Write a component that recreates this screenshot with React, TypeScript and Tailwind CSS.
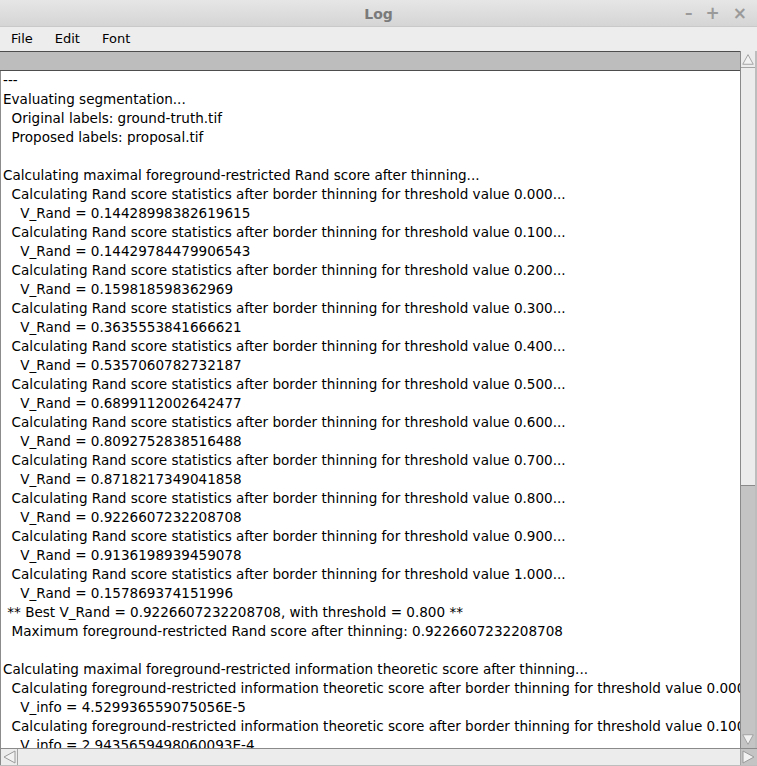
import React from 'react';

const rand: [string, string][] = [
  ['0.000', '0.14428998382619615'],
  ['0.100', '0.14429784479906543'],
  ['0.200', '0.159818598362969'],
  ['0.300', '0.3635553841666621'],
  ['0.400', '0.5357060782732187'],
  ['0.500', '0.6899112002642477'],
  ['0.600', '0.8092752838516488'],
  ['0.700', '0.8718217349041858'],
  ['0.800', '0.9226607232208708'],
  ['0.900', '0.9136198939459078'],
  ['1.000', '0.157869374151996'],
];

const lines: string[] = [
  '---',
  'Evaluating segmentation...',
  '  Original labels: ground-truth.tif',
  '  Proposed labels: proposal.tif',
  '',
  'Calculating maximal foreground-restricted Rand score after thinning...',
  ...rand.flatMap(([t, v]) => [
    `  Calculating Rand score statistics after border thinning for threshold value ${t}...`,
    `    V_Rand = ${v}`,
  ]),
  ' ** Best V_Rand = 0.9226607232208708, with threshold = 0.800 **',
  '  Maximum foreground-restricted Rand score after thinning: 0.9226607232208708',
  '',
  'Calculating maximal foreground-restricted information theoretic score after thinning...',
  '  Calculating foreground-restricted information theoretic score after border thinning for threshold value 0.000...',
  '    V_info = 4.529936559075056E-5',
  '  Calculating foreground-restricted information theoretic score after border thinning for threshold value 0.100...',
  '    V_info = 2.9435659498060093E-4',
];

function Arrow({ dir }: { dir: 'up' | 'down' | 'left' | 'right' }) {
  const pts = {
    up: '2,14 8,3 14,14',
    down: '2,2 8,13 14,2',
    left: '14,2 3,8 14,14',
    right: '2,2 13,8 2,14',
  }[dir];
  return (
    <svg width="16" height="16" viewBox="0 0 16 16">
      <polygon points={pts} fill="#f2f2f2" stroke="#9a9a9a" strokeWidth="1" />
    </svg>
  );
}

export default function App() {
  return (
    <div
      className="w-[757px] h-[766px] flex flex-col bg-[#ececec] overflow-hidden text-black"
      style={{ fontFamily: '"DejaVu Sans", sans-serif' }}
    >
      {/* Title bar */}
      <div className="relative h-[27px] shrink-0 bg-gradient-to-b from-[#e6e6e6] to-[#d5d5d5] border-b border-[#c9c9c9] flex items-center justify-center pt-[2px]">
        <span className="text-[14px] font-bold text-[#7a7a7a]">Log</span>
        <div className="absolute right-[10px] top-0 h-full flex items-center gap-[13px] text-[#9a9a9a] font-bold">
          <span className="text-[15px] leading-none">–</span>
          <span className="text-[17px] leading-none">+</span>
          <span className="text-[17px] leading-none">×</span>
        </div>
      </div>

      {/* Menu bar */}
      <div className="h-[24px] shrink-0 flex items-center pl-[11px] gap-[22px] text-[13px] bg-[#ededed]">
        <span>File</span>
        <span>Edit</span>
        <span>Font</span>
      </div>

      {/* Content */}
      <div className="flex-1 flex min-h-0">
        <div className="flex-1 flex flex-col min-w-0">
          <div className="h-[20px] shrink-0 bg-[#bdbdbd] border-y border-[#4d4d4d]" />
          <div className="flex-1 bg-white border-l border-[#8c8c8c] overflow-hidden pl-[2px]">
            {lines.map((l, i) => (
              <div key={i} className="whitespace-pre text-[13.55px] leading-[19px] h-[19px]">
                {l}
              </div>
            ))}
          </div>
        </div>

        {/* Vertical scrollbar */}
        <div className="w-[17px] shrink-0 flex flex-col bg-[#c4c4c4] border-l border-[#8a8a8a] border-r-2 border-r-[#bdbdbd]">
          <div className="h-[17px] shrink-0 flex items-center justify-center bg-[#ececec] border-b border-[#a5a5a5]">
            <Arrow dir="up" />
          </div>
          <div className="h-[418px] shrink-0 bg-[#ececec] border-b border-[#8a8a8a]" />
          <div className="flex-1" />
          <div className="h-[17px] shrink-0 flex items-center justify-center bg-[#c4c4c4]">
            <Arrow dir="down" />
          </div>
        </div>
      </div>

      {/* Horizontal scrollbar */}
      <div className="h-[18px] shrink-0 flex bg-[#ececec] border-t border-[#8a8a8a] border-b border-b-[#bdbdbd]">
        <div className="w-[18px] shrink-0 flex items-center justify-center border-r border-[#a5a5a5] border-l border-l-[#8a8a8a]">
          <Arrow dir="left" />
        </div>
        <div className="flex-1 bg-[#ececec]" />
        <div className="w-[17px] shrink-0 flex items-center justify-center bg-[#c4c4c4] border-l border-[#a5a5a5]">
          <Arrow dir="right" />
        </div>
      </div>
    </div>
  );
}
